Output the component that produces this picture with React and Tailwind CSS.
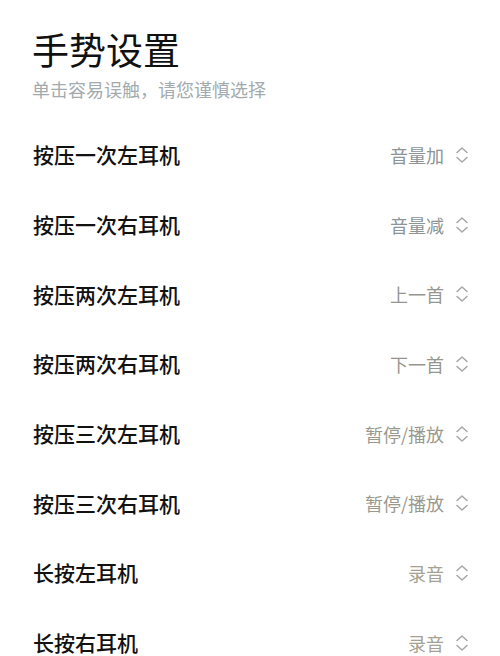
import React from "react";

const rows = [
  { label: "按压一次左耳机", value: "音量加", tone: "text-[#8c9497]" },
  { label: "按压一次右耳机", value: "音量减", tone: "text-[#8c9497]" },
  { label: "按压两次左耳机", value: "上一首", tone: "text-[#969690]" },
  { label: "按压两次右耳机", value: "下一首", tone: "text-[#969690]" },
  { label: "按压三次左耳机", value: "暂停/播放", tone: "text-[#9a998e]" },
  { label: "按压三次右耳机", value: "暂停/播放", tone: "text-[#9a998e]" },
  { label: "长按左耳机", value: "录音", tone: "text-[#a5a293]" },
  { label: "长按右耳机", value: "录音", tone: "text-[#a5a293]" },
];

function UpDown() {
  return (
    <svg width="14" height="20" viewBox="0 0 14 20" fill="none" className="shrink-0">
      <path d="M2 7.5 L7 3 L12 7.5" stroke="#a3a7a8" strokeWidth="1.5" strokeLinecap="round" strokeLinejoin="round" />
      <path d="M2 12.5 L7 17 L12 12.5" stroke="#a3a7a8" strokeWidth="1.5" strokeLinecap="round" strokeLinejoin="round" />
    </svg>
  );
}

export default function App() {
  return (
    <div
      className="w-[500px] h-[656px] overflow-hidden bg-white"
      style={{ fontFamily: '"Noto Sans CJK SC", "Noto Sans", sans-serif' }}
    >
      <div className="pl-[32px] pt-[31px]">
        <h1 className="text-[37px] leading-none font-normal text-[#111]">手势设置</h1>
        <p className="mt-[12px] text-[18px] leading-none text-[#a3abae]">单击容易误触，请您谨慎选择</p>
      </div>
      <div className="mt-[22px] pl-[33px] pr-[31px]">
        {rows.map((r, i) => (
          <div key={i} className="h-[69.7px] flex items-center justify-between">
            <span className="text-[21px] leading-none font-medium text-[#111]">{r.label}</span>
            <div className="flex items-center gap-[11px]">
              <span className={`text-[18px] leading-none ${r.tone}`}>{r.value}</span>
              <UpDown />
            </div>
          </div>
        ))}
      </div>
    </div>
  );
}
